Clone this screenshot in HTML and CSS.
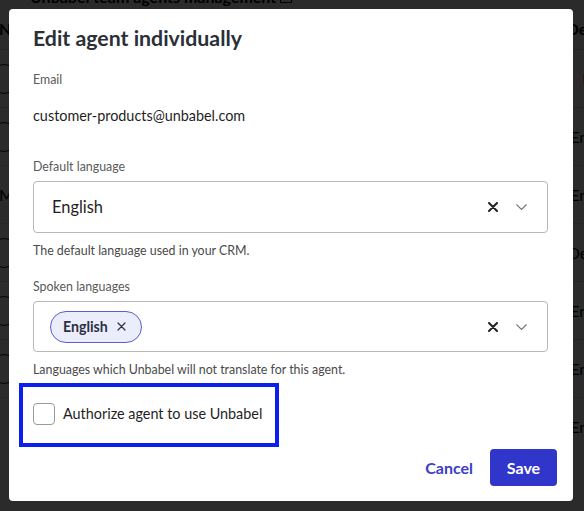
FILE: index.html
```html
<!DOCTYPE html>
<html>
<head>
    <title>Edit agent individually</title>
    <link rel="stylesheet" href="styles.css">
</head>
<body>
    <div class="page">
        <h2 class="page-title">Unbabel team agents management <span class="page-icon"></span></h2>
        <div class="page-head"><span>Name</span><span>Default</span></div>
        <div class="page-row"><span class="avatar"></span><span>Email</span></div>
        <div class="page-row"><span class="avatar"></span><span>English</span></div>
        <div class="page-row"><span>Maria</span><span>English</span></div>
        <div class="page-row"><span class="avatar"></span><span>Default</span></div>
        <div class="page-row"><span class="avatar"></span><span>English</span></div>
        <div class="page-row"><span class="avatar"></span><span>English</span></div>
        <div class="page-row"><span class="page-check"></span><span>English</span></div>
    </div>

    <div class="backdrop"></div>

    <div class="modal">
        <h1>Edit agent individually</h1>

        <div class="field">
            <div class="label">Email</div>
            <div class="value">customer-products@unbabel.com</div>
        </div>

        <div class="field">
            <div class="label">Default language</div>
            <div class="select">
                <span class="select-text">English</span>
                <div class="select-icons">
                    <svg class="clear" width="10" height="10" viewBox="0 0 10 10"><path d="M1 1L9 9M9 1L1 9" stroke="#222" stroke-width="2" stroke-linecap="round"/></svg>
                    <svg class="chevron" width="11" height="6" viewBox="0 0 11 6"><path d="M0.5 0.5L5.5 5.5L10.5 0.5" fill="none" stroke="#777" stroke-width="1.2"/></svg>
                </div>
            </div>
            <div class="help">The default language used in your CRM.</div>
        </div>

        <div class="field">
            <div class="label">Spoken languages</div>
            <div class="select multi">
                <span class="chip">English
                    <svg width="9" height="9" viewBox="0 0 9 9"><path d="M1 1L8 8M8 1L1 8" stroke="#2b2f45" stroke-width="1.2" stroke-linecap="round"/></svg>
                </span>
                <div class="select-icons">
                    <svg class="clear" width="10" height="10" viewBox="0 0 10 10"><path d="M1 1L9 9M9 1L1 9" stroke="#222" stroke-width="2" stroke-linecap="round"/></svg>
                    <svg class="chevron" width="11" height="6" viewBox="0 0 11 6"><path d="M0.5 0.5L5.5 5.5L10.5 0.5" fill="none" stroke="#777" stroke-width="1.2"/></svg>
                </div>
            </div>
            <div class="help">Languages which Unbabel will not translate for this agent.</div>
        </div>

        <label class="check-row">
            <span class="checkbox"></span>
            <span>Authorize agent to use Unbabel</span>
        </label>

        <div class="footer">
            <button class="btn-link">Cancel</button>
            <button class="btn-primary">Save</button>
        </div>
    </div>
</body>
</html>
```

FILE: styles.css
```css
body {
    margin: 0;
    font-family: Lato, "Noto Sans", sans-serif;
    background: #fff;
    overflow: hidden;
    height: 511px;
}
.page {
    padding-left: 30px;
}
.page-title {
    margin: -13px 0 0;
    font-size: 16px;
    line-height: 20px;
    font-weight: 700;
    color: #000;
}
.page-icon {
    display: inline-block;
    width: 10px;
    height: 10px;
    border: 1px solid #000;
}
.page-head,
.page-row {
    display: flex;
    align-items: center;
    justify-content: space-between;
    margin: 0 -36px 0 -31px;
    font-size: 16px;
    color: #000;
}
.page-head {
    height: 42px;
    font-weight: 700;
}
.page-row {
    height: 57px;
    border-top: 1px solid #ddd;
}
.avatar {
    width: 28px;
    height: 28px;
    margin-left: -10px;
    border: 1px solid #000;
    border-radius: 50%;
}
.page-check {
    width: 20px;
    height: 20px;
    margin: 50px 0 0 52px;
    border: 1px solid #000;
    border-radius: 4px;
}
.backdrop {
    position: fixed;
    inset: 0;
    background: rgba(0, 0, 0, 0.83);
}
.modal {
    position: absolute;
    left: 9px;
    top: 9px;
    width: 564px;
    height: 492px;
    box-sizing: border-box;
    padding: 17px 25px 0 24px;
    background: #fff;
    border-radius: 4px;
}
h1 {
    margin: 0;
    font-size: 21.3px;
    line-height: 24px;
    font-weight: 700;
    color: #2b2f38;
}
.field {
    margin-top: 22px;
}
.field + .field {
    margin-top: 33px;
}
.field + .field + .field {
    margin-top: 20px;
}
.label {
    font-size: 12.4px;
    line-height: 16px;
    color: #5a5a5a;
}
.value {
    margin-top: 18px;
    font-size: 14.4px;
    line-height: 20px;
    color: #1f1f1f;
}
.select {
    display: flex;
    align-items: center;
    height: 52px;
    box-sizing: border-box;
    margin-top: 6px;
    padding: 0 20px 0 18px;
    border: 1px solid #b8b8b8;
    border-radius: 4px;
}
.select.multi {
    height: 51px;
    padding-left: 16px;
}
.select-text {
    flex: 1;
    font-size: 16.4px;
    line-height: 20px;
    color: #1f1f1f;
}
.select-icons {
    display: flex;
    align-items: center;
    gap: 18px;
    margin-left: auto;
}
.chip {
    display: inline-flex;
    align-items: center;
    gap: 9px;
    height: 32px;
    box-sizing: border-box;
    padding: 0 15px 0 12px;
    border: 1px solid #5a5fcf;
    border-radius: 16px;
    background: #ecedfb;
    font-size: 14.2px;
    font-weight: 700;
    color: #2b2f45;
}
.help {
    margin-top: 10px;
    font-size: 12.4px;
    line-height: 16px;
    color: #4a4a4a;
}
.check-row {
    display: flex;
    align-items: center;
    gap: 8px;
    width: 260px;
    box-sizing: border-box;
    margin: 5px 0 0 -14px;
    padding: 16px 10px 18px;
    border: 4px solid #0a1ff0;
    font-size: 14.4px;
    line-height: 20px;
    color: #1f1f1f;
}
.checkbox {
    width: 22px;
    height: 22px;
    box-sizing: border-box;
    border: 1.5px solid #9a9a9a;
    border-radius: 4px;
}
.footer {
    display: flex;
    justify-content: flex-end;
    align-items: center;
    gap: 17px;
    margin: 2px -9px 0 0;
}
button {
    font-family: inherit;
    font-size: 16px;
    font-weight: 700;
    border: none;
    cursor: pointer;
}
.btn-link {
    padding: 0;
    background: none;
    color: #3a40c5;
}
.btn-primary {
    width: 67px;
    height: 37px;
    border-radius: 4px;
    background: #2f36c9;
    color: #fff;
}
```
